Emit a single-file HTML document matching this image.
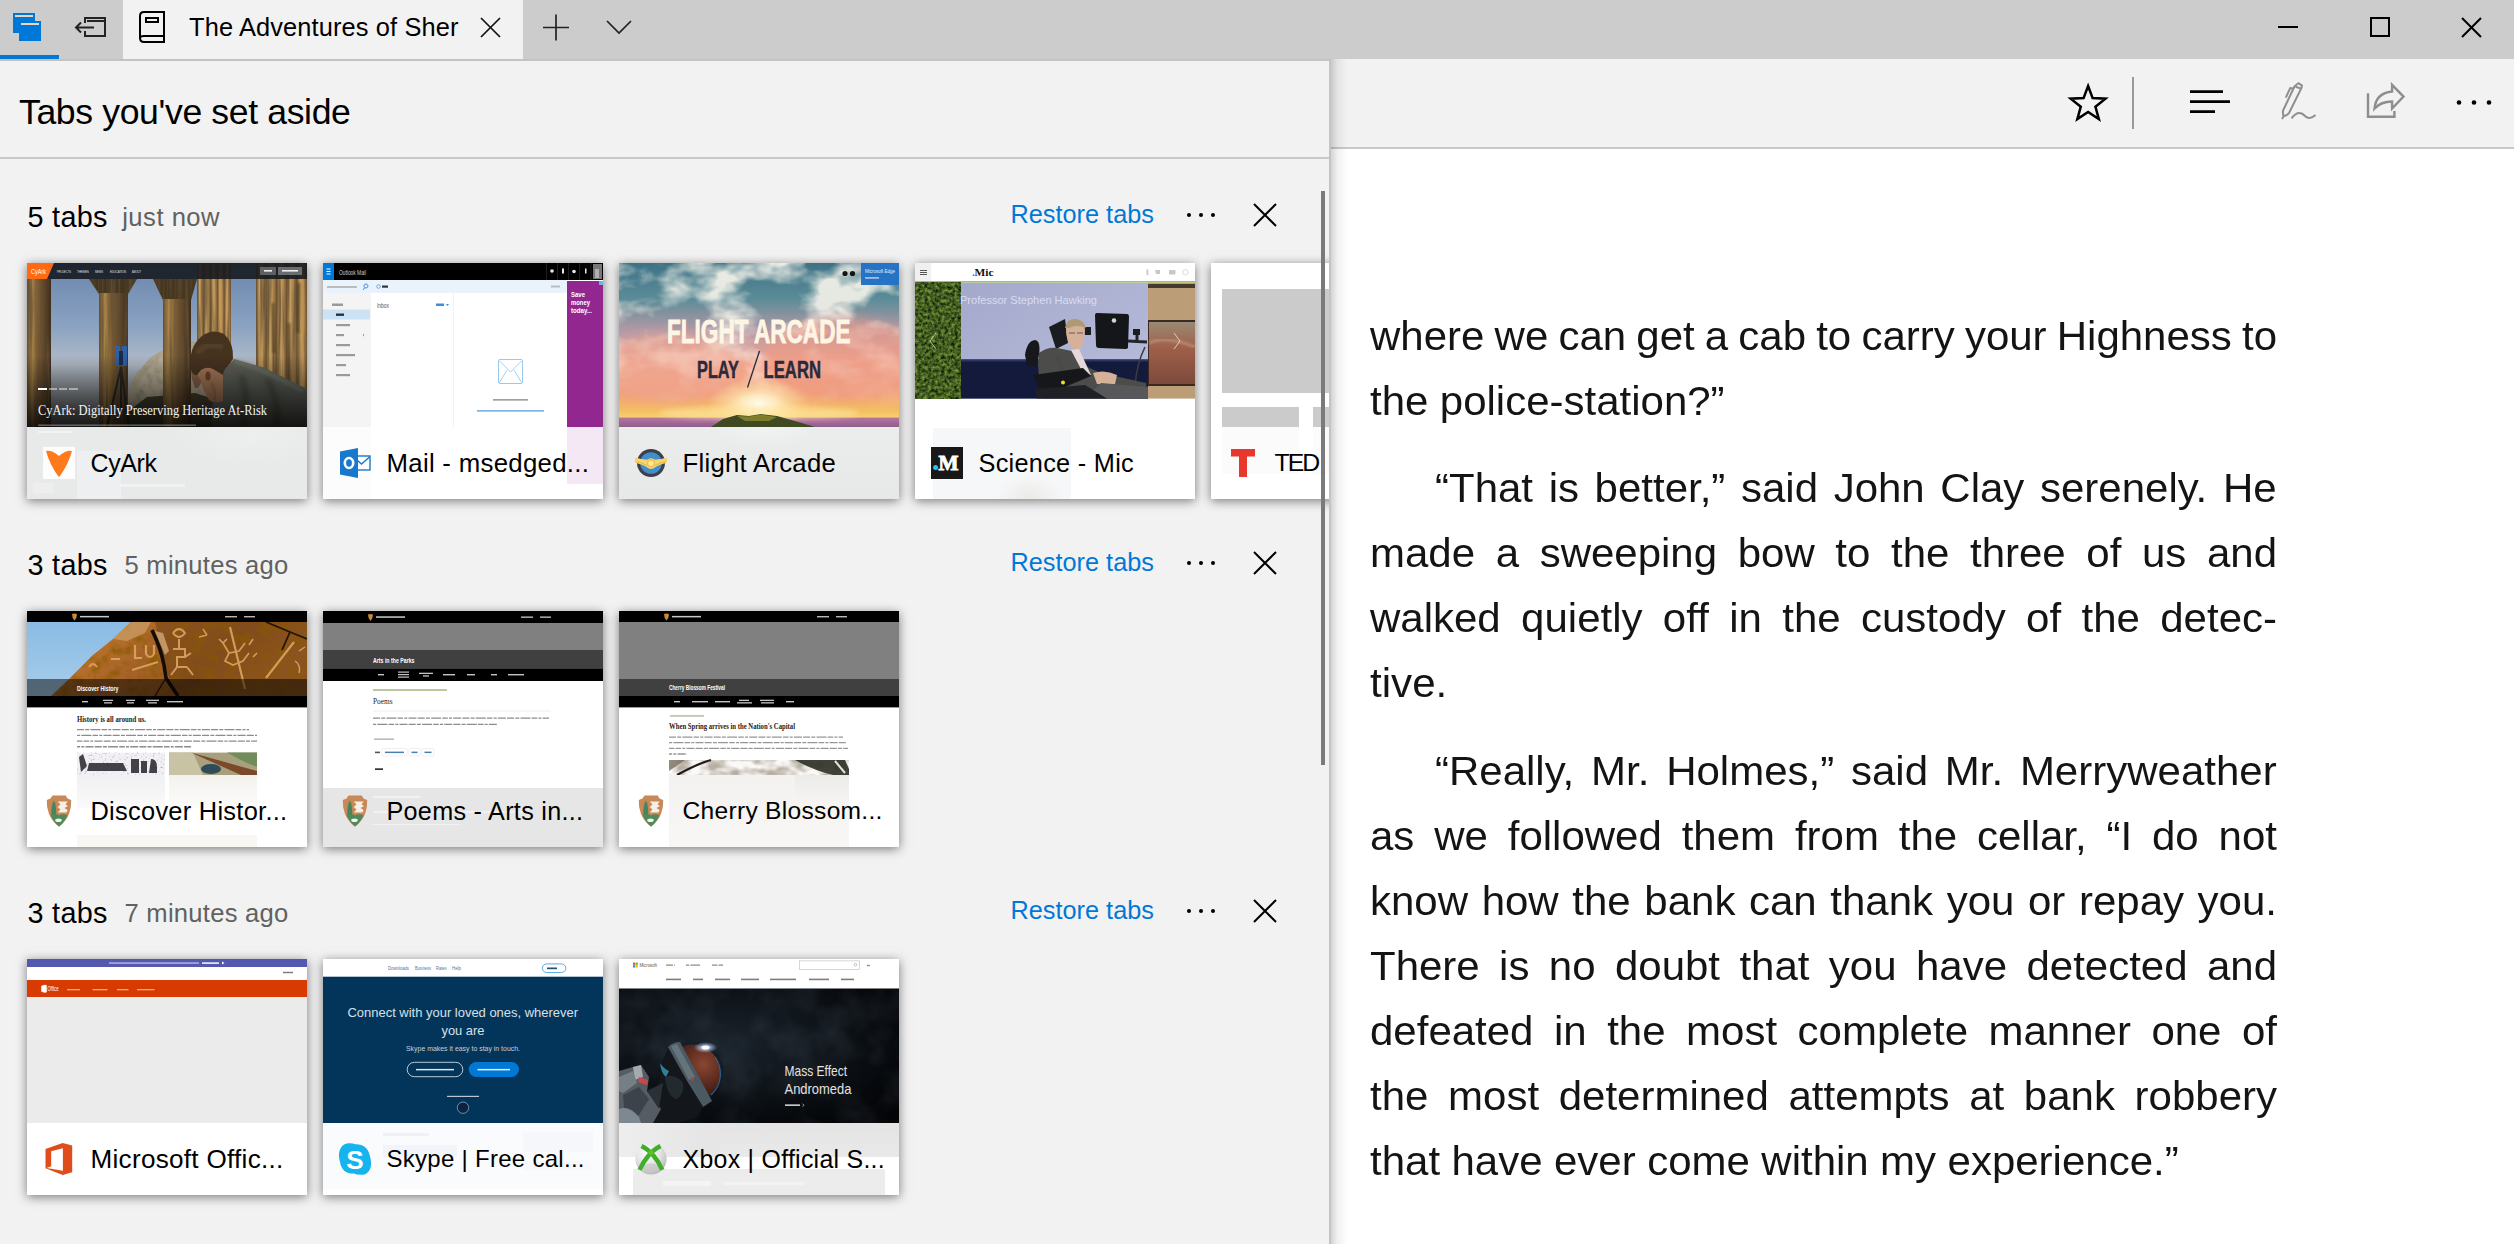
<!DOCTYPE html>
<html><head><meta charset="utf-8"><title>Tabs you've set aside</title>
<style>
*{box-sizing:border-box;margin:0;padding:0}
html,body{width:2514px;height:1244px;overflow:hidden;background:#fff}
body{font-family:"Liberation Sans",sans-serif;color:#000;position:relative}
.abs{position:absolute}
#titlebar{position:absolute;left:0;top:0;width:2514px;height:59px;background:#cccccc}
#tbline{position:absolute;left:0;top:59px;width:1331px;height:2px;background:#c3c3c3}
#tab{position:absolute;left:123px;top:0;width:400px;height:59px;background:#f2f2f2}
#tabtxt{position:absolute;left:189px;top:12px;font-size:25.4px;line-height:30px;white-space:nowrap;letter-spacing:.13px}
#bluebar{position:absolute;left:0;top:55px;width:59px;height:4px;background:#0078d7}
#panel{position:absolute;left:0;top:61px;width:1329px;height:1183px;background:#f2f2f2}
#pborder{position:absolute;left:1329px;top:59px;width:2px;height:1185px;background:#c4c4c4}
#pshadow{position:absolute;left:1331px;top:59px;width:16px;height:1185px;background:linear-gradient(90deg,rgba(0,0,0,.17),rgba(0,0,0,.06) 40%,rgba(0,0,0,0))}
#phead{position:absolute;left:19px;top:92px;font-size:35.6px;line-height:40px;white-space:nowrap;letter-spacing:-0.36px}
#pline{position:absolute;left:0;top:157px;width:1329px;height:2px;background:#c8c8c8}
#scroll{display:none}
#toolbar{position:absolute;left:1331px;top:59px;width:1183px;height:88px;background:#f2f2f2}
#tline{position:absolute;left:1331px;top:147px;width:1183px;height:2px;background:#c9c9c9}
.gh{position:absolute;left:0;width:1329px;height:50px}
.gh .n{position:absolute;left:27.5px;top:-0.5px;font-size:28.8px;line-height:34px;white-space:nowrap;letter-spacing:.3px}
.gh .t{position:absolute;left:124.5px;top:.4px;font-size:25.6px;line-height:34px;color:#616161;white-space:nowrap;letter-spacing:.25px}
.gh .r{position:absolute;left:1010.5px;top:-3px;font-size:25.3px;line-height:34px;color:#0078d7;white-space:nowrap;letter-spacing:0}
.gh .d{position:absolute;top:13px;width:4.4px;height:4.4px;border-radius:50%;background:#000}
.gh svg{position:absolute;left:1252px;top:2px}
.card{position:absolute;width:280px;height:236px;background:#fff;box-shadow:0 2px 10px rgba(0,0,0,.5);overflow:hidden}
.img{position:absolute;left:0;top:0;width:280px;height:164px;overflow:hidden}
.lbl{position:absolute;left:0;top:164px;width:280px;height:72px;overflow:hidden}
.fav{position:absolute;left:16px;top:184px;width:32px;height:32px}
.ttl{position:absolute;left:63.5px;top:183.5px;font-size:25px;line-height:32px;white-space:nowrap;letter-spacing:.28px}
.rl{position:absolute;font-size:41.5px;line-height:60px;white-space:pre;transform-origin:0 0;color:#141414}
</style></head><body>
<div id="titlebar"></div>
<div id="tab"></div>
<div id="tbline"></div>
<div id="bluebar"></div>
<!-- tab icons -->
<svg class="abs" style="left:0;top:0" width="540" height="59" viewBox="0 0 540 59">
 <rect x="13" y="13" width="22" height="20" fill="#0078d7"/>
 <rect x="19" y="21" width="22" height="20" fill="#0078d7"/>
 <rect x="15" y="15" width="18" height="2" fill="#e6d6c8"/>
 <rect x="21" y="23" width="18" height="2" fill="#e6d6c8"/>
 <g fill="none" stroke="#222" stroke-width="2">
  <path d="M85 23 V18 H105 V36 H85 V31"/>
  <path d="M87 21 H104"/>
  <path d="M94 27.5 H76 M81 22.5 L76 27.5 L81 32.5"/>
 </g>
 <g fill="none" stroke="#000" stroke-width="2">
  <path d="M164 12 H144 Q140 12 140 16 V38 Q140 42 144 42 H164 Z"/>
  <path d="M140 38 Q140 36 144 36 H164"/>
  <rect x="146" y="18" width="12" height="4"/>
 </g>
 <g fill="none" stroke="#111" stroke-width="1.7">
  <path d="M481 18 L500 37 M500 18 L481 37"/>
  <path d="M543 27.5 H569 M556 14.500 V40.500"/>
 </g>
</svg>
<div id="tabtxt">The Adventures of Sher</div>
<svg class="abs" style="left:530px;top:0" width="120" height="59" viewBox="0 0 120 59">
 <g fill="none" stroke="#222" stroke-width="1.7"><path d="M13 27.5 H39 M26 14.5 V40.5"/><path d="M77 21 L89 33 L101 21"/></g>
</svg>
<!-- window controls -->
<svg class="abs" style="left:2260px;top:0" width="254" height="59" viewBox="0 0 254 59">
 <g fill="none" stroke="#000" stroke-width="2"><path d="M18 27 H38"/><rect x="111" y="18" width="18" height="18"/><path d="M202 18 L221 37 M221 18 L202 37"/></g>
</svg>
<div id="panel"></div>
<div id="toolbar"></div>
<div id="tline"></div>
<div id="pborder"></div>
<div id="pshadow"></div>
<div id="phead">Tabs you've set aside</div>
<div id="pline"></div>
<div id="scroll"></div>
<!-- toolbar icons -->
<svg class="abs" style="left:2040px;top:59px" width="474" height="88" viewBox="0 0 474 88">
 <path d="M48.10 27.00 L52.63 39.07 L65.50 39.64 L55.42 47.68 L58.86 60.11 L48.10 53.00 L37.34 60.11 L40.78 47.68 L30.70 39.64 L43.57 39.07 Z" fill="none" stroke="#000" stroke-width="2.5"/>
 <rect x="92" y="18" width="2" height="52" fill="#999"/>
 <g stroke="#000" stroke-width="2.7"><path d="M150 32.600 H183 M150 42.700 H190 M150 52.600 H175"/></g>
 <g fill="none" stroke="#8e8e8e" stroke-width="2" stroke-linejoin="round"><path d="M254.400 27.500 L258.300 24.200 L261.900 26.400 L261.500 28.900 L249.300 53.500 Q247.500 56.500 243.800 57 Q242.300 54.500 243.200 51.300 Z"/><path d="M255.500 27.800 L261.300 29.600"/><path d="M253 29.800 L250.300 28.900 L245.800 38.600"/><path d="M243.800 57 L242 60"/><path d="M251.500 59.300 Q255.500 54 259.400 54 Q262.500 54 265 57 Q269.500 61.500 275.500 56.100"/></g>
 <g fill="none" stroke="#8e8e8e" stroke-width="2.400"><path d="M328 34.300 V57.800 H354.400 V52"/><path d="M352.100 25.800 L363.500 37.600 L352.100 49.500 V42.500 Q341 42.500 334.500 49.500 Q336 34 352.100 32.500 Z"/></g>
 <g fill="#000"><circle cx="419" cy="43.500" r="2.300"/><circle cx="434" cy="43.500" r="2.300"/><circle cx="449" cy="43.500" r="2.300"/></g>
</svg>
<div class="gh" style="top:200px"><div class="n">5 tabs</div><div class="t" style="left:122.2px;letter-spacing:.5px">just now</div><div class="r">Restore tabs</div>
<div class="d" style="left:1186.7px"></div><div class="d" style="left:1198.9px"></div><div class="d" style="left:1210.8px"></div>
<svg width="26" height="26" viewBox="0 0 26 26"><path d="M2 2 L24 24 M24 2 L2 24" stroke="#000" stroke-width="2" fill="none"/></svg></div>
<div class="gh" style="top:548px"><div class="n">3 tabs</div><div class="t">5 minutes ago</div><div class="r">Restore tabs</div>
<div class="d" style="left:1186.7px"></div><div class="d" style="left:1198.9px"></div><div class="d" style="left:1210.8px"></div>
<svg width="26" height="26" viewBox="0 0 26 26"><path d="M2 2 L24 24 M24 2 L2 24" stroke="#000" stroke-width="2" fill="none"/></svg></div>
<div class="gh" style="top:896px"><div class="n">3 tabs</div><div class="t">7 minutes ago</div><div class="r">Restore tabs</div>
<div class="d" style="left:1186.7px"></div><div class="d" style="left:1198.9px"></div><div class="d" style="left:1210.8px"></div>
<svg width="26" height="26" viewBox="0 0 26 26"><path d="M2 2 L24 24 M24 2 L2 24" stroke="#000" stroke-width="2" fill="none"/></svg></div><!-- shared defs -->
<svg width="0" height="0" style="position:absolute">
 <defs>
  <filter id="b1" x="-10%" y="-10%" width="120%" height="120%"><feGaussianBlur stdDeviation="1"/></filter>
  <filter id="b2" x="-20%" y="-20%" width="140%" height="140%"><feGaussianBlur stdDeviation="2.5"/></filter>
  <filter id="b4" x="-30%" y="-30%" width="160%" height="160%"><feGaussianBlur stdDeviation="5"/></filter>
  <filter id="bs" x="-5%" y="-5%" width="110%" height="110%"><feGaussianBlur stdDeviation="0.45"/></filter>
  <symbol id="nps" viewBox="0 0 32 32">
   <g filter="url(#bs)">
   <path d="M9.500 .5 H22.700 L24.500 3.500 L28.200 5 Q28.600 12 26 19 Q22.500 27 16 31.800 Q9.500 27 6 19 Q3.400 12 3.800 5 L7.500 3.500 Z" fill="#c98858"/>
   <path d="M7.500 20 Q12 17.500 16 20.500 Q20 18 24.500 20.500 Q21 27.500 16 31.500 Q11 27.500 7.500 20 Z" fill="#4d8a5c"/>
   <path d="M10.800 5.500 Q13.500 9 13.200 19.500 L8.300 19.500 Q8 10 10.800 5.500 Z" fill="#47855a"/>
   <path d="M14.700 6.500 H24.500 L22.500 9.500 L25 11 L21.500 13 L24.600 15 L23.500 17.500 H14.800 L17.500 14.500 L14.700 12 L17.500 9.500 Z" fill="#f7efe6"/>
   <ellipse cx="15.500" cy="25.200" rx="3.300" ry="1.800" fill="#f3f6f2"/>
   </g>
  </symbol>
 </defs>
</svg>

<!-- ============ ROW 1 ============ -->
<!-- CyArk -->
<div class="card" style="left:27px;top:263px">
<div class="img"><svg width="280" height="164" viewBox="0 0 280 164">
 <defs>
  <linearGradient id="cy_sky" x1="0" y1="0" x2="0" y2="1"><stop offset="0" stop-color="#6a86ad"/><stop offset=".4" stop-color="#8ca4c2"/><stop offset=".62" stop-color="#b3bcc8"/><stop offset=".8" stop-color="#9a9ea3"/><stop offset="1" stop-color="#6d6f70"/></linearGradient>
  <linearGradient id="cy_c1" x1="0" y1="0" x2="1" y2="0"><stop offset="0" stop-color="#6b5030"/><stop offset=".2" stop-color="#a98548"/><stop offset=".45" stop-color="#7a5c34"/><stop offset=".75" stop-color="#5a4328"/><stop offset="1" stop-color="#3e2e1c"/></linearGradient>
  <linearGradient id="cy_c2" x1="0" y1="0" x2=".2" y2="0" spreadMethod="repeat"><stop offset="0" stop-color="#6e5230"/><stop offset=".35" stop-color="#c79e5e"/><stop offset=".7" stop-color="#b48c50"/><stop offset="1" stop-color="#6e5230"/></linearGradient>
  <linearGradient id="cy_dk" x1="0" y1="0" x2="0" y2="1"><stop offset="0" stop-color="#000" stop-opacity="0"/><stop offset=".55" stop-color="#000" stop-opacity=".45"/><stop offset="1" stop-color="#000" stop-opacity=".8"/></linearGradient>
  <filter id="cy_st" x="0" y="0" width="100%" height="100%"><feTurbulence type="fractalNoise" baseFrequency=".35 .012" numOctaves="2" seed="8"/><feColorMatrix values="0 0 0 0 .12  0 0 0 0 .08  0 0 0 0 .04  2.600 0 0 0 -1.050"/></filter>
  <filter id="cy_rk" x="0" y="0" width="100%" height="100%"><feTurbulence type="fractalNoise" baseFrequency=".12 .09" numOctaves="3" seed="21"/><feColorMatrix values="0 0 0 0 .25  0 0 0 0 .22  0 0 0 0 .16  2.200 0 0 0 -1"/></filter>
  <clipPath id="cy_cols"><path d="M0 16 H24 V164 H0 Z M62 16 H110 L101 31 V164 H72 V31 Z M126 16 H170 L164 37 V164 H136 V37 Z M170 0 H204 V120 H170 Z M229 0 H280 V164 H229 Z"/></clipPath>
  <clipPath id="cy_mt"><path d="M96 140 L108 112 L124 94 L148 80 L170 78 L196 96 L240 104 L280 100 V164 H96 Z"/></clipPath>
 </defs>
 <rect width="280" height="164" fill="url(#cy_sky)"/>
 <path d="M96 140 L108 112 L124 94 L148 80 L170 78 L196 96 L240 104 L280 100 V164 H96 Z" fill="#aea58e"/>
 <path d="M110 122 L128 98 L150 86 L162 96 L150 120 L128 140 Z" fill="#bdb49c" opacity=".75"/>
 <rect x="96" y="76" width="184" height="88" filter="url(#cy_rk)" clip-path="url(#cy_mt)" opacity=".7"/>
 <path d="M96 152 L120 134 L168 130 L200 140 V164 H96 Z" fill="#45412f"/>
 <rect x="0" y="16" width="24" height="148" fill="url(#cy_c1)"/>
 <path d="M62 16 H110 L101 31 H72 Z" fill="#45351f"/>
 <rect x="72" y="30" width="29" height="134" fill="url(#cy_c1)"/>
 <path d="M126 16 H170 L164 37 H136 Z" fill="#48371f"/>
 <rect x="136" y="36" width="28" height="128" fill="url(#cy_c1)"/>
 <rect x="170" y="0" width="34" height="120" fill="url(#cy_c2)"/>
 <rect x="229" y="0" width="51" height="164" fill="url(#cy_c2)"/>
 <rect width="280" height="164" filter="url(#cy_st)" clip-path="url(#cy_cols)" opacity=".85"/>
 <path d="M246 40 L247 90 M262 60 L263 120 M272 20 L271 70" stroke="#2f2012" stroke-width="3" fill="none" opacity=".5" filter="url(#b1)"/>
 <rect x="88" y="83" width="5" height="20" fill="#2f5fa5"/><rect x="95" y="83" width="5" height="20" fill="#2f5fa5"/><rect x="92" y="88" width="4" height="14" fill="#1b2c48"/>
 <path d="M94 104 L80 164 M94 104 L102 164 M94 104 L94 150" stroke="#2a2622" stroke-width="2"/>
 <path d="M186 136 L195 110 L207 96 L237 104.700 L280 126 V164 H184 Z" fill="#5d6057"/>
 <path d="M207 98 Q232 104 276 128" stroke="#777b70" stroke-width="5" fill="none" opacity=".55" filter="url(#b1)"/>
 <path d="M214 112 Q222 130 216 164 M240 116 Q252 136 250 164" stroke="#3a3d36" stroke-width="6" fill="none" opacity=".6" filter="url(#b2)"/>
 <path d="M174 107 Q180 103 186 106 L196 110 V138 Q188 141 182 137 Q176 128 173 118 Z" fill="#a67756"/>
 <path d="M164 106 L170 111 L174 118 Q173 126 168 125 Q164 116 164 106 Z" fill="#86604a"/>
 <path d="M164 106 Q161 84 175 73 Q186 65 197 71 Q207 80 206 96 L200 104 Q196 108 196 112 L186 106 Q180 103 174 107 L170 112 Q165 112 164 106 Z" fill="#46331f"/>
 <path d="M170 90 Q180 78 196 84" stroke="#5e4830" stroke-width="6" fill="none" opacity=".55" filter="url(#b1)"/>
 <ellipse cx="181" cy="113" rx="2.600" ry="4.500" fill="#6e4330"/>
 <path d="M184 120 Q190 128 188 138" stroke="#8a5e44" stroke-width="3" fill="none" opacity=".7" filter="url(#b1)"/>
 <rect y="92" width="280" height="72" fill="url(#cy_dk)"/>
 <rect width="280" height="16" fill="#14181e" opacity=".88"/>
 <path d="M0 0 H27 L20 16 H0 Z" fill="#ff6a13"/>
 <text x="4" y="11" font-size="7" fill="#fff" font-family="Liberation Sans" textLength="15" lengthAdjust="spacingAndGlyphs">CyArk</text>
 <g fill="#e0e0e0" font-size="4.200" font-family="Liberation Sans"><text x="30" y="9.700" textLength="14" lengthAdjust="spacingAndGlyphs">PROJECTS</text><text x="50" y="9.700" textLength="12" lengthAdjust="spacingAndGlyphs">THEMES</text><text x="68" y="9.700" textLength="8" lengthAdjust="spacingAndGlyphs">NEWS</text><text x="83" y="9.700" textLength="16" lengthAdjust="spacingAndGlyphs">EDUCATION</text><text x="105" y="9.700" textLength="9" lengthAdjust="spacingAndGlyphs">ABOUT</text></g>
 <rect x="233" y="4" width="16" height="8" fill="#6f757c" opacity=".75"/><rect x="251" y="4" width="24" height="8" fill="#80858c" opacity=".75"/>
 <rect x="237" y="7" width="8" height="1.600" fill="#eee"/><rect x="255" y="7" width="16" height="1.600" fill="#eee"/>
 <rect x="11" y="125" width="9" height="2" fill="#fff"/><rect x="22" y="125" width="8" height="2" fill="#fff" opacity=".45"/><rect x="32" y="125" width="8" height="2" fill="#fff" opacity=".45"/><rect x="42" y="125" width="9" height="2" fill="#fff" opacity=".45"/>
 <text x="11" y="151.500" font-size="15.500" fill="#f2f2f2" font-family="Liberation Serif" textLength="229" lengthAdjust="spacingAndGlyphs">CyArk: Digitally Preserving Heritage At-Risk</text>
 <rect x="11" y="161.500" width="158" height="1.400" fill="#bbb" opacity=".5"/>
</svg></div>
<div class="lbl" style="background:#e8e9e9"><div class="abs" style="left:11px;top:4px;width:34px;height:2px;background:#f3f3f3"></div><div class="abs" style="left:50px;top:24px;width:44px;height:48px;background:#eff0f1;opacity:.8"></div><div class="abs" style="left:92px;top:57px;width:66px;height:2.500px;background:#f2f2f2"></div><div class="abs" style="left:6px;top:56px;width:20px;height:10px;background:#eeeeee"></div><div class="abs" style="left:140px;top:0;width:140px;height:40px;background:radial-gradient(ellipse at 60% 20%,#edeeee,rgba(232,233,233,0) 70%)"></div></div>
<svg class="fav" viewBox="0 0 32 32"><rect width="32" height="32" fill="#fdfdfd"/><path d="M3 4 Q9 3 16 9 Q23 3 29 4 Q25 18 17 29 Q16 30 15 29 Q7 18 3 4 Z" fill="#ff7a1a" filter="url(#bs)"/></svg>
<div class="ttl" style="font-size:25px;letter-spacing:-.4px">CyArk</div>
</div>

<!-- Mail -->
<div class="card" style="left:323px;top:263px">
<div class="img"><svg width="280" height="164" viewBox="0 0 280 164">
 <rect width="280" height="164" fill="#fff"/>
 <rect y="17" width="48" height="147" fill="#f4f4f4"/>
 <rect y="17" width="244" height="13" fill="#eaf3fb"/>
 <rect y="46.500" width="47" height="10" fill="#cce3f6"/>
 <rect x="130" y="30" width=".6" height="134" fill="#e8e8e8"/>
 <rect width="280" height="17" fill="#000"/>
 <rect width="11" height="17" fill="#0078d7"/>
 <path d="M3.500 6 H7.500 M3.500 8.500 H7.500 M3.500 11 H7.500" stroke="#fff" stroke-width="1"/>
 <text x="16" y="11.500" font-size="6.500" fill="#d0d0d0" font-family="Liberation Sans" textLength="27" lengthAdjust="spacingAndGlyphs">Outlook Mail</text>
 <g stroke="#333" stroke-width=".6"><path d="M223.500 0 V17 M234.500 0 V17 M245.500 0 V17 M256.500 0 V17 M268 0 V17"/></g>
 <g fill="#e8e8e8"><circle cx="229" cy="8" r="1.800"/><rect x="239" y="5.500" width="2" height="5"/><circle cx="251" cy="8.500" r="1.800"/><rect x="262" y="5.500" width="1.500" height="5"/></g>
 <rect x="270" y="1" width="9" height="15" fill="#777"/><rect x="272" y="6" width="4" height="9" fill="#b0b0b0"/>
 <g fill="#9a9a9a"><rect x="4" y="23" width="30" height="2" opacity=".6"/><rect x="9" y="40.500" width="11" height="2.500"/><rect x="13" y="61" width="14" height="2.200"/><rect x="13" y="71" width="8" height="2.200"/><rect x="40" y="71" width="1" height="2.200"/><rect x="13" y="81" width="14" height="2.200"/><rect x="13" y="91" width="19" height="2.200"/><rect x="13" y="101" width="10" height="2.200"/><rect x="13" y="111" width="14" height="2.200"/></g>
 <rect x="13" y="50.500" width="8" height="2.400" fill="#234"/>
 <path d="M43 21 a2 2 0 1 1 -.1 0 M41.500 25 L40 27" stroke="#2a7fd0" stroke-width=".9" fill="none"/>
 <circle cx="55.500" cy="23.500" r="1.800" fill="none" stroke="#2a7fd0" stroke-width=".6"/><rect x="59" y="22.500" width="6" height="2.200" fill="#333"/>
 <rect x="228" y="22.500" width="9" height="2" fill="#bbb"/>
 <text x="54" y="44.500" font-size="6.500" fill="#555" font-family="Liberation Sans" textLength="12" lengthAdjust="spacingAndGlyphs">Inbox</text>
 <rect x="113" y="40.500" width="8" height="2.500" fill="#3a8fd8"/><path d="M123 41 l1.500 2 l1.500 -2" fill="#3a8fd8"/>
 <rect x="175.500" y="96.500" width="24" height="24" rx="1.500" fill="none" stroke="#8cc3ea" stroke-width=".9"/>
 <path d="M176.500 98 L187.500 109 L198.500 98 M176.500 119.500 L184 107 M198.500 119.500 L191 107" stroke="#8cc3ea" stroke-width=".8" fill="none"/>
 <rect x="170" y="136" width="35" height="1.700" fill="#8a8a8a" opacity=".8"/>
 <rect x="154" y="147" width="67" height="1.700" fill="#5aa2e2" opacity=".8"/>
 <rect x="244" y="18" width="36" height="146" fill="#92278f"/>
 <g fill="#fff" font-size="8" font-weight="700" font-family="Liberation Sans"><text x="248" y="34" textLength="14" lengthAdjust="spacingAndGlyphs">Save</text><text x="248" y="42" textLength="19" lengthAdjust="spacingAndGlyphs">money</text><text x="248" y="50" textLength="21" lengthAdjust="spacingAndGlyphs">today...</text></g>
 <rect x="276" y="18" width="4" height="4" fill="#7ab0e0"/>
</svg></div>
<div class="lbl" style="background:#fff"><div class="abs" style="left:0;top:0;width:48px;height:72px;background:#fcfcfc"></div><div class="abs" style="left:244px;top:0;width:36px;height:57px;background:#f3e8f3"></div></div>
<svg class="fav" viewBox="0 0 32 32"><rect x="14" y="9" width="17" height="14" fill="#fff" stroke="#1878cd" stroke-width="1.400"/><path d="M14.500 10 L22.500 17 L30.500 10" fill="none" stroke="#1878cd" stroke-width="1.400"/><path d="M1 4.500 L19 1 V31 L1 27.500 Z" fill="#1878cd"/><ellipse cx="10" cy="16" rx="4.200" ry="5" fill="none" stroke="#fff" stroke-width="2.600"/></svg>
<div class="ttl" style="font-size:25.8px">Mail - msedged...</div>
</div>

<!-- Flight Arcade -->
<div class="card" style="left:619px;top:263px">
<div class="img"><svg width="280" height="164" viewBox="0 0 280 164">
 <defs>
  <linearGradient id="fa_sky" x1="0" y1="0" x2="0" y2="1"><stop offset="0" stop-color="#3d7285"/><stop offset=".22" stop-color="#5b8c98"/><stop offset=".42" stop-color="#b79aa6"/><stop offset=".6" stop-color="#efa590"/><stop offset=".8" stop-color="#f1a078"/><stop offset=".9" stop-color="#f4be62"/><stop offset=".94" stop-color="#f6cf70"/><stop offset=".945" stop-color="#b773a0"/><stop offset="1" stop-color="#8d5f8c"/></linearGradient>
  <radialGradient id="fa_sun" cx=".5" cy=".5" r=".5"><stop offset="0" stop-color="#fffdf0" stop-opacity="1"/><stop offset=".35" stop-color="#fff2c8" stop-opacity=".85"/><stop offset="1" stop-color="#ffd98a" stop-opacity="0"/></radialGradient>
  <filter id="fa_cl" x="0" y="0" width="100%" height="100%"><feTurbulence type="fractalNoise" baseFrequency=".016 .026" numOctaves="4" seed="14"/><feColorMatrix values="0 0 0 0 1  0 0 0 0 .95  0 0 0 0 .86  4.200 0 0 0 -1.850"/></filter>
  <linearGradient id="fa_m" x1="0" y1="0" x2="0" y2="1"><stop offset="0" stop-color="#fff"/><stop offset=".55" stop-color="#fff" stop-opacity=".85"/><stop offset=".9" stop-color="#fff" stop-opacity="0"/></linearGradient>
  <mask id="fa_mask"><rect width="280" height="164" fill="url(#fa_m)"/></mask>
 </defs>
 <rect width="280" height="164" fill="url(#fa_sky)"/>
 <rect width="280" height="150" filter="url(#fa_cl)" mask="url(#fa_mask)" opacity=".9"/>
 <ellipse cx="225" cy="95" rx="80" ry="40" fill="#ef9a84" opacity=".55" filter="url(#b4)"/>
 <ellipse cx="50" cy="105" rx="70" ry="35" fill="#f0a692" opacity=".55" filter="url(#b4)"/>
 <ellipse cx="140" cy="141" rx="52" ry="26" fill="url(#fa_sun)"/>
 <ellipse cx="140" cy="150" rx="100" ry="7" fill="#ffe9a8" opacity=".55" filter="url(#b2)"/>
 <path d="M92 164 L104 156 L118 152 L130 153 L142 151 L158 153 L176 158 L196 164 Z" fill="#3f4a22"/>
 <path d="M118 153 L130 153.500 L142 151.500 L158 154 L150 158 L126 158 Z" fill="#8d8a2e" opacity=".8"/>
 <rect x="242" y="0" width="38" height="22" fill="#2672c4"/>
 <text x="246" y="10" font-size="6" fill="#e8f0fb" font-family="Liberation Sans" textLength="30" lengthAdjust="spacingAndGlyphs">Microsoft Edge</text>
 <rect x="246" y="14" width="14" height="1.800" fill="#9cc0ea"/>
 <circle cx="226" cy="10.500" r="2.600" fill="#141414"/><circle cx="233.500" cy="10.500" r="2.600" fill="#141414"/>
 <text x="48" y="79.500" font-size="33.500" font-weight="700" fill="#fdf6e4" stroke="#fdf6e4" stroke-width=".9" font-family="Liberation Sans" textLength="183.500" lengthAdjust="spacingAndGlyphs">FLIGHT ARCADE</text>
 <text x="78" y="115" font-size="23.500" font-weight="700" fill="#2b2a3c" stroke="#2b2a3c" stroke-width=".5" font-family="Liberation Sans" textLength="42" lengthAdjust="spacingAndGlyphs">PLAY</text>
 <text x="144.500" y="115" font-size="23.500" font-weight="700" fill="#2b2a3c" stroke="#2b2a3c" stroke-width=".5" font-family="Liberation Sans" textLength="57.500" lengthAdjust="spacingAndGlyphs">LEARN</text>
 <path d="M140.500 88 L128.500 124.500" stroke="#2b2a3c" stroke-width="1.300"/>
</svg></div>
<div class="lbl" style="background:linear-gradient(180deg,#ebecec,#e7e8e8)"><div class="abs" style="left:90px;top:0;width:110px;height:22px;background:radial-gradient(ellipse at 50% 0,#f2f2f2,rgba(242,242,242,0) 70%)"></div></div>
<svg class="fav" viewBox="0 0 32 32"><circle cx="16" cy="16" r="14" fill="#3e3e4c"/><circle cx="16" cy="16" r="10.800" fill="#3f8fcd"/><path d="M0 10.500 Q6 12.500 12 12.800 Q16 9.800 20 12.800 Q26 12.500 32 10.500 V15.500 Q25 17.500 20.500 20 Q16 24 11.500 20 Q7 17.500 0 15.500 Z" fill="#fbd46c"/><path d="M1 14.500 Q8 16 12 18.500 M31 14.500 Q24 16 20 18.500" stroke="#e9b94e" stroke-width="1.200" fill="none"/><circle cx="16" cy="16.300" r="4" fill="#eebc52"/><circle cx="16" cy="16.300" r="2.800" fill="#fde88a"/></svg>
<div class="ttl" style="font-size:25.7px">Flight Arcade</div>
</div>

<!-- Mic -->
<div class="card" style="left:915px;top:263px">
<div class="img"><svg width="280" height="164" viewBox="0 0 280 164">
 <defs>
  <filter id="mc_f" x="0" y="0" width="100%" height="100%"><feTurbulence type="fractalNoise" baseFrequency=".22" numOctaves="2" seed="3"/><feColorMatrix values="0 0 0 0 .24  0 0 0 0 .36  0 0 0 0 .12  0 0 0 0 1"/><feComponentTransfer><feFuncR type="linear" slope="1"/></feComponentTransfer></filter>
  <filter id="mc_f2" x="0" y="0" width="100%" height="100%" color-interpolation-filters="sRGB"><feTurbulence type="fractalNoise" baseFrequency=".3" numOctaves="3" seed="5"/><feColorMatrix values=".8 0 0 0 -.125  .9 0 0 0 -.075  .35 0 0 0 -.04  0 0 0 0 1"/></filter>
  <linearGradient id="mc_bg" x1="0" y1="0" x2="1" y2="1"><stop offset="0" stop-color="#a4a9cc"/><stop offset="1" stop-color="#b9bddb"/></linearGradient>
  <linearGradient id="mc_pt" x1="0" y1="0" x2="0" y2="1"><stop offset="0" stop-color="#9a8a74"/><stop offset=".4" stop-color="#a0604a"/><stop offset="1" stop-color="#7d4a3c"/></linearGradient>
 </defs>
 <rect width="280" height="164" fill="#fff"/>
 <rect width="16" height="18" fill="#f0f0f0"/>
 <path d="M5 7.500 H12 M5 9.500 H12 M5 11.500 H12" stroke="#444" stroke-width=".9"/>
 <text x="59.500" y="13" font-size="9.500" font-weight="700" fill="#111" font-family="Liberation Serif" textLength="19" lengthAdjust="spacingAndGlyphs">Mic</text><rect x="57.700" y="11.300" width="1.700" height="1.700" fill="#1aa3e8"/>
 <g fill="#c8c8c8"><rect x="231.500" y="6.500" width="1.800" height="5.500"/><path d="M240 7 h5 v4 h-4 z"/><rect x="254" y="7" width="6.500" height="4.500" rx="1"/><circle cx="270.500" cy="9.300" r="2.700" fill="none" stroke="#d0d0d0" stroke-width=".8"/></g>
 <rect y="18" width="280" height="1.600" fill="#9bd03c"/>
 <rect x="0" y="19.600" width="46" height="116" filter="url(#mc_f2)"/>
 <rect x="0" y="19.600" width="46" height="116" fill="#2e4a18" opacity=".12"/>
 <rect x="46" y="19.600" width="187" height="116" fill="url(#mc_bg)"/>
 <rect x="46" y="96.500" width="187" height="39.100" fill="#131a3c"/>
 <rect x="46" y="96.500" width="187" height="2" fill="#2a3560"/>
 <rect x="233" y="19.600" width="47" height="116" fill="#bb9d78"/>
 <rect x="233" y="21" width="47" height="4" fill="#2a2018" opacity=".8"/>
 <rect x="233" y="57" width="47" height="66" fill="#3b2a22"/><rect x="234" y="59" width="46" height="62" fill="url(#mc_pt)"/>
 <path d="M234 80 Q250 72 280 84" stroke="#c9a890" stroke-width="3" fill="none" opacity=".5" filter="url(#b1)"/>
 <!-- person -->
 <path d="M180 52 Q180 50 182 50 L212 51 Q214 51 214 54 L213 84 Q213 86 210 86 L184 85 Q181 85 181 82 Z" fill="#15161a"/>
 <circle cx="199" cy="57.500" r="2.300" fill="#cfd3da"/>
 <path d="M213 78 L232 79 M222 70 v10" stroke="#23252c" stroke-width="3" fill="none"/>
 <path d="M230 84 Q222 100 220 122" stroke="#3a3c44" stroke-width="1.600" fill="none"/>
 <rect x="218" y="66" width="7" height="6" fill="#1c1d22"/>
 <path d="M110 92 Q112 78 120 77 Q126 78 124 92 L121 104 L112 102 Z" fill="#17181c"/>
 <path d="M134 64 L150 56 L153 80 L141 86 Z" fill="#1b1c20"/>
 <path d="M168 64 h8 v8 h-6 z" fill="#1b1c20"/>
 <path d="M151 66 Q152 57 160 57 Q170 58 170 68 L168 82 Q163 89 157 85 Q151 78 151 66 Z" fill="#d6b199"/>
 <path d="M150 65 Q152 55 161 56 Q169 57 171 65 Q162 61 154 65 Z" fill="#b09a74"/>
 <path d="M154 70 h6 m2 0 h6" stroke="#6a5a4a" stroke-width="1.200"/>
 <path d="M124 90 Q132 84 142 85 L157 88 L168 102 L186 110 L231 120 L233 135.600 H128 Q124 118 123 102 Z" fill="#4c4c4a"/>
 <path d="M140 92 Q150 104 152 126" stroke="#484846" stroke-width="2" fill="none" opacity=".7"/>
 <path d="M156 87 L164 86 L176 112 L168 110 Z" fill="#e5d8da"/>
 <path d="M178 110 Q190 106 202 112 L200 121 L182 121 Z" fill="#d6b199"/>
 <path d="M186 120 L233 124 V135.600 H170 Z" fill="#58585a"/>
 <path d="M118 112 L168 105 L176 113 L150 124 L126 128 Z" fill="#16171b"/>
 <circle cx="148" cy="119.500" r="2" fill="#e8e030"/>
 <path d="M120 126 L170 122 L192 135.600 H122 Z" fill="#202126"/>
 <text x="45" y="40.500" font-size="10.800" fill="#d9dcf0" font-family="Liberation Sans" textLength="137" lengthAdjust="spacingAndGlyphs">Professor Stephen Hawking</text>
 <path d="M21 70 L15 78 L21 86" stroke="#e0e6d8" stroke-width=".9" fill="none" opacity=".8"/><path d="M259 70 L265 78 L259 86" stroke="#f0e8e0" stroke-width=".9" fill="none" opacity=".85"/>
</svg></div>
<div class="lbl" style="background:#fff"><div class="abs" style="left:18px;top:1px;width:138px;height:71px;background:#f6f7f9"></div><div class="abs" style="left:80px;top:48px;width:70px;height:24px;background:radial-gradient(ellipse at 50% 100%,#eceae6,rgba(246,247,249,0) 70%)"></div></div>
<svg class="fav" viewBox="0 0 32 32"><rect width="32" height="32" fill="#181818"/><text x="7.600" y="22.800" font-size="21.500" font-weight="700" fill="#fff" stroke="#fff" stroke-width=".9" font-family="Liberation Serif" textLength="20" lengthAdjust="spacingAndGlyphs">M</text><circle cx="4.600" cy="20.600" r="2.500" fill="#2cc0f4"/></svg>
<div class="ttl" style="font-size:25.3px">Science - Mic</div>
</div>

<!-- TED (clipped) -->
<div class="abs" style="left:1203px;top:250px;width:126px;height:262px;overflow:hidden">
<div class="card" style="left:8px;top:13px">
<div class="img" style="background:#fff"><div class="abs" style="left:11px;top:26px;width:269px;height:104px;background:#cbcbcb"></div><div class="abs" style="left:11px;top:144px;width:77px;height:20px;background:#cbcbcb"></div><div class="abs" style="left:101.500px;top:144px;width:100px;height:20px;background:#cbcbcb"></div></div>
<div class="lbl" style="background:#fff"><div class="abs" style="left:11px;top:0;width:77px;height:47px;background:#fbfbfb"></div><div class="abs" style="left:101.500px;top:0;width:100px;height:47px;background:#fbfbfb"></div></div>
<svg class="fav" style="left:16px;top:184px" viewBox="0 0 32 32"><path d="M4 2 H28 V9.600 H20 V30 H12 V9.600 H4 Z" fill="#e8382d"/></svg>
<div class="ttl" style="font-size:24.8px;letter-spacing:-2px">TED</div>
</div></div>

<!-- ============ ROW 2 ============ -->
<!-- Discover History -->
<div class="card" style="left:27px;top:611px">
<div class="img"><svg width="280" height="164" viewBox="0 0 280 164">
 <defs>
  <linearGradient id="dh_sky" x1="0" y1="0" x2="0" y2="1"><stop offset="0" stop-color="#8abbe4"/><stop offset="1" stop-color="#a8cdea"/></linearGradient>
  <linearGradient id="dh_rk" x1="0" y1="0" x2="1" y2=".3"><stop offset="0" stop-color="#94541a"/><stop offset=".3" stop-color="#b8722a"/><stop offset=".5" stop-color="#a8642a"/><stop offset=".75" stop-color="#9a5a22"/><stop offset="1" stop-color="#b06c2a"/></linearGradient>
  <filter id="dh_n" x="0" y="0" width="100%" height="100%"><feTurbulence type="fractalNoise" baseFrequency=".09" numOctaves="3" seed="11"/><feColorMatrix values="0 0 0 0 .25  0 0 0 0 .1  0 0 0 0 0  1.8 0 0 0 -.75"/></filter>
  <filter id="dh_n2" x="0" y="0" width="100%" height="100%"><feTurbulence type="fractalNoise" baseFrequency=".5" numOctaves="2" seed="2"/><feColorMatrix values="0 0 0 0 .2  0 0 0 0 .2  0 0 0 0 .22  2 0 0 0 -1.150"/></filter>
  <clipPath id="dh_cp"><path d="M104 11 H280 V85 H24 L42 68 L66 44 L86 28 Z"/></clipPath>
 </defs>
 <rect width="280" height="164" fill="#fff"/>
 <rect y="11" width="280" height="74" fill="url(#dh_sky)"/>
 <g clip-path="url(#dh_cp)"><rect y="11" width="280" height="74" fill="url(#dh_rk)"/>
  <path d="M128 11 H280 V85 H152 L139 60 Z" fill="#6e4016" opacity=".55"/>
  <rect y="11" width="280" height="74" filter="url(#dh_n)"/>
  <path d="M86 28 L96 18 L104 11 H124 L118 22 L100 30 Z" fill="#c89a62" opacity=".8"/>
  <path d="M128 20 L136 22 L142 40 L138 44 Z" fill="#c9a272" opacity=".85"/>
  <path d="M125 19 Q134 38 137 54 L139 67 L151 85" stroke="#140c06" stroke-width="3.600" fill="none"/>
  <path d="M139 67 L128 85" stroke="#1e1208" stroke-width="1.200" fill="none"/>
  <path d="M239 11 L263 21 L280 28 M263 21 L255 39" stroke="#241408" stroke-width="1.800" fill="none"/>
  <g stroke="#dfa662" fill="none" opacity=".88" filter="url(#bs)">
   <path d="M108 34 v13 h7 M119 34 v9 q4 6 8 0 v-9" stroke-width="2.200"/>
   <path d="M105 59 L131 51" stroke-width="2"/>
   <path d="M84 48 h9 M62 56 q4 -6 8 0" stroke-width="1.800"/>
   <path d="M146 22 q6 -8 12 0 q-6 8 -12 0 M152 28 v10 M146 38 h12 v8 h-8 v10 h10 M158 46 l6 -4 M150 56 l-6 8 M160 56 l6 8" stroke-width="2"/>
   <path d="M203 16 L218 78" stroke-width="2.200"/>
   <path d="M192 28 l4 4 l4 -4 M196 32 l6 10 l10 -2 l6 -8 M202 42 l-4 8 l8 4 l10 -4 l6 -8 M222 34 l4 -6 M226 46 l4 -4" stroke-width="1.700"/>
   <path d="M267 31 L239 67" stroke-width="2.200"/>
   <path d="M176 18 l4 6 m-8 2 l8 -2 M268 50 q6 4 4 12 M272 40 l6 -4" stroke-width="1.500"/>
  </g>
 </g>
 <rect y="68" width="280" height="17" fill="#000" opacity=".5"/>
 <rect width="280" height="11" fill="#000"/>
 <rect y="85" width="280" height="11.400" fill="#000"/>
 <path d="M45 3 q2.500 -1 5 0 q0 4 -2.500 6.500 q-2.500 -2.500 -2.500 -6.500 z" fill="#c78a3c"/>
 <g fill="#c9c9c9"><rect x="53" y="4.900" width="29" height="1.500"/><rect x="198" y="5.100" width="12" height="1.300"/><rect x="217" y="5.100" width="11" height="1.300"/></g>
 <text x="50" y="79.500" font-size="6.800" font-weight="700" fill="#fff" font-family="Liberation Sans" textLength="41.500" lengthAdjust="spacingAndGlyphs">Discover History</text>
 <g fill="#c4c4c4"><rect x="55" y="90" width="6" height="1.400"/><rect x="76" y="88.700" width="10" height="1.300"/><rect x="77" y="91.200" width="8" height="1.300"/><rect x="99" y="88.700" width="9" height="1.300"/><rect x="100" y="91.200" width="7" height="1.300"/><rect x="119" y="88.700" width="13" height="1.300"/><rect x="121" y="91.200" width="9" height="1.300"/><rect x="140" y="90" width="16" height="1.400"/></g>
 <text x="50" y="110.500" font-size="7.600" font-weight="700" fill="#222" font-family="Liberation Serif" textLength="69" lengthAdjust="spacingAndGlyphs">History is all around us.</text>
 <g stroke="#8c8c8c" stroke-width="1.35" stroke-dasharray="7 1.2 4 1.2 10 1.2 5.500 1.200 3 1.200 8 1.200" fill="none"><path d="M50 118.55 H222" stroke-dashoffset="0"/><path d="M50 124.35 H230" stroke-dashoffset="9"/><path d="M50 130.05 H230" stroke-dashoffset="18"/><path d="M50 135.75 H165" stroke-dashoffset="27"/></g>
 <rect x="50" y="141.600" width="88" height="22.400" fill="#f2f0f4"/>
 <rect x="50" y="141.600" width="88" height="22.400" filter="url(#dh_n2)"/>
 <path d="M52 146 l4 -3 l4 12 l-6 6 z M62 152 h34 l4 8 h-40 z M104 148 h8 v14 h-8 z M124 148 q6 0 6 8 v6 h-8 z M114 150 h6 v12 h-6z" fill="#26232a" opacity=".85"/>
 <rect x="142" y="141.600" width="88" height="22.400" fill="#a8a07c"/>
 <path d="M142 141.600 H166 L176 164 H142 Z" fill="#c9c3a6"/><path d="M164 141.600 L230 160 V164 H214 Z" fill="#7a4a2a"/><path d="M200 141.600 H230 V156 Q214 150 200 141.600 Z" fill="#6f8c5a"/><ellipse cx="184" cy="158" rx="10" ry="5" fill="#2f4a58"/>
</svg></div>
<div class="lbl" style="background:#fff"><div class="abs" style="left:50px;top:0;width:88px;height:33px;background:linear-gradient(180deg,#f1f0f2,#fafafa)"></div><div class="abs" style="left:142px;top:0;width:88px;height:33px;background:linear-gradient(180deg,#f3f2ee,#fbfbfa)"></div><div class="abs" style="left:50px;top:60px;width:180px;height:12px;background:#f9f7f2"></div></div>
<svg class="fav"><use href="#nps" width="32" height="32"/></svg>
<div class="ttl" style="font-size:25.4px">Discover Histor...</div>
</div>

<!-- Poems -->
<div class="card" style="left:323px;top:611px">
<div class="img"><svg width="280" height="164" viewBox="0 0 280 164">
 <rect width="280" height="164" fill="#fff"/>
 <rect width="280" height="12" fill="#000"/>
 <rect y="12" width="280" height="27" fill="#808080"/>
 <rect y="39" width="280" height="18.300" fill="#404040"/>
 <rect y="57.300" width="280" height="12.700" fill="#000"/>
 <path d="M45 3.500 q2.500 -1 5 0 q0 4 -2.500 6.500 q-2.500 -2.500 -2.500 -6.500 z" fill="#c78a3c"/>
 <g fill="#c9c9c9"><rect x="53" y="5.300" width="29" height="1.500"/><rect x="198" y="5.500" width="12" height="1.300"/><rect x="217" y="5.500" width="11" height="1.300"/></g>
 <text x="50" y="51.500" font-size="6.800" font-weight="700" fill="#fff" font-family="Liberation Sans" textLength="41.500" lengthAdjust="spacingAndGlyphs">Arts in the Parks</text>
 <g fill="#c4c4c4"><rect x="55" y="63" width="6" height="1.400"/><rect x="75" y="60.500" width="11" height="1.200"/><rect x="75" y="63" width="11" height="1.200"/><rect x="75" y="65.500" width="11" height="1.200"/><rect x="96" y="61.700" width="14" height="1.300"/><rect x="100" y="64.300" width="6" height="1.300"/><rect x="120" y="63" width="12" height="1.400"/><rect x="144" y="63" width="8" height="1.400"/><rect x="168" y="63" width="6" height="1.400"/><rect x="185" y="63" width="16" height="1.400"/></g>
 <rect x="50" y="78.300" width="74" height="1.400" fill="#8a9a50" opacity=".8"/>
 <text x="50" y="93" font-size="8" fill="#222" font-family="Liberation Serif" textLength="19.500" lengthAdjust="spacingAndGlyphs">Poems</text>
 <rect x="50" y="99.800" width="178" height=".5" fill="#ddd"/>
 <g stroke="#8c8c8c" stroke-width="1.35" stroke-dasharray="7 1.2 4 1.2 10 1.2 5.500 1.200 3 1.200 8 1.200" fill="none"><path d="M50 107.15 H226" stroke-dashoffset="0"/><path d="M50 113.35 H175" stroke-dashoffset="9"/></g>
 <rect x="51" y="127.500" width="20" height="1.300" fill="#aaa"/>
 <rect x="52" y="140.600" width="5" height="1.600" fill="#555"/>
 <g fill="none" stroke="#dfe5ec" stroke-width=".6"><rect x="59" y="137.500" width="25" height="7.500" rx="1"/><rect x="86" y="137.500" width="11" height="7.500" rx="1"/><rect x="99" y="137.500" width="12" height="7.500" rx="1"/></g>
 <g fill="#4a7fb0"><rect x="62" y="140.600" width="19" height="1.500"/><rect x="88.500" y="140.600" width="6" height="1.500"/><rect x="101.500" y="140.600" width="7" height="1.500"/></g>
 <rect x="52" y="157.300" width="8" height="1.700" fill="#333"/>
</svg></div>
<div class="lbl" style="background:#e6e6e6"><div class="abs" style="left:0;top:0;width:280px;height:13px;background:#fff"></div><div class="abs" style="left:50px;top:21px;width:47px;height:1.500px;background:#f2f2f2"></div><div class="abs" style="left:50px;top:36px;width:150px;height:1.500px;background:#f0f0f0"></div><div class="abs" style="left:50px;top:48.500px;width:88px;height:1.500px;background:#f2f2f2"></div></div>
<svg class="fav"><use href="#nps" width="32" height="32"/></svg>
<div class="ttl" style="font-size:25.2px">Poems - Arts in...</div>
</div>

<!-- Cherry Blossom -->
<div class="card" style="left:619px;top:611px">
<div class="img"><svg width="280" height="164" viewBox="0 0 280 164">
 <defs><filter id="cb_n" x="0" y="0" width="100%" height="100%"><feTurbulence type="fractalNoise" baseFrequency=".07 .12" numOctaves="2" seed="4"/><feColorMatrix values="0 0 0 0 .96  0 0 0 0 .95  0 0 0 0 .94  2.600 0 0 0 -.75"/></filter></defs>
 <rect width="280" height="164" fill="#fff"/>
 <rect width="280" height="11" fill="#000"/>
 <rect y="11" width="280" height="57" fill="#808080"/>
 <rect y="68" width="280" height="17" fill="#404040"/>
 <rect y="85" width="280" height="11.400" fill="#000"/>
 <path d="M45 3 q2.500 -1 5 0 q0 4 -2.500 6.500 q-2.500 -2.500 -2.500 -6.500 z" fill="#c78a3c"/>
 <g fill="#c9c9c9"><rect x="53" y="4.900" width="29" height="1.500"/><rect x="198" y="5.100" width="12" height="1.300"/><rect x="217" y="5.100" width="11" height="1.300"/></g>
 <text x="50" y="79.300" font-size="6.800" font-weight="700" fill="#fff" font-family="Liberation Sans" textLength="56" lengthAdjust="spacingAndGlyphs">Cherry Blossom Festival</text>
 <g fill="#c4c4c4"><rect x="55" y="90" width="6" height="1.400"/><rect x="73" y="90" width="16" height="1.400"/><rect x="96" y="90" width="15" height="1.400"/><rect x="120" y="88.700" width="10" height="1.300"/><rect x="118" y="91.200" width="15" height="1.300"/><rect x="141" y="88.700" width="14" height="1.300"/><rect x="142" y="91.200" width="13" height="1.300"/><rect x="167" y="90" width="8" height="1.400"/></g>
 <rect x="51" y="104.300" width="34" height="1.300" fill="#9a9a78" opacity=".8"/>
 <text x="50" y="118" font-size="7.800" font-weight="700" fill="#222" font-family="Liberation Serif" textLength="126" lengthAdjust="spacingAndGlyphs">When Spring arrives in the Nation's Capital</text>
 <g stroke="#969696" stroke-width="1.35" stroke-dasharray="7 1.2 4 1.2 10 1.2 5.500 1.200 3 1.200 8 1.200" fill="none"><path d="M50 126.05 H224" stroke-dashoffset="0"/><path d="M50 131.65 H228" stroke-dashoffset="9"/><path d="M50 137.35 H229" stroke-dashoffset="18"/><path d="M50 142.95 H68" stroke-dashoffset="27"/></g>
 <rect x="50" y="149" width="180" height="15" fill="#b9b0a4"/>
 <rect x="50" y="149" width="180" height="15" filter="url(#cb_n)"/>
 <path d="M50 149 H66 L56 156 L50 160 Z" fill="#6c5f50" opacity=".7"/>
 <path d="M58 164 Q80 152 92 149" stroke="#1c1c18" stroke-width="2.200" fill="none"/>
 <path d="M176 149 H226 L230 158 V164 H214 Q196 160 176 149 Z" fill="#2e3026" opacity=".9"/>
 <path d="M216 150 L226 162" stroke="#e8e4e0" stroke-width="2"/>
</svg></div>
<div class="lbl" style="background:#fff"><div class="abs" style="left:50px;top:0;width:180px;height:72px;background:linear-gradient(180deg,#f3f2f0,#f8f7f5)"></div><div class="abs" style="left:176px;top:0;width:54px;height:30px;background:linear-gradient(180deg,#ebebe9,#f6f5f3)"></div></div>
<svg class="fav"><use href="#nps" width="32" height="32"/></svg>
<div class="ttl" style="font-size:24.6px">Cherry Blossom...</div>
</div>

<!-- ============ ROW 3 ============ -->
<!-- Office -->
<div class="card" style="left:27px;top:959px">
<div class="img"><svg width="280" height="164" viewBox="0 0 280 164">
 <rect width="280" height="164" fill="#ebebeb"/>
 <rect width="280" height="8" fill="#5558af"/>
 <rect y="8" width="280" height="13" fill="#fff"/>
 <rect y="21" width="280" height="17" fill="#d83b01"/>
 <rect x="82" y="3.400" width="90" height="1.300" fill="#c9caec" opacity=".9"/><rect x="175" y="3.300" width="17" height="1.600" fill="#eeeefa"/><path d="M195 2.500 l2.500 1.500 l-2.500 1.500 z" fill="#fff"/>
 <rect x="256" y="12.800" width="10" height="1.400" fill="#777"/>
 <path d="M14.500 27 L18 26 V33.500 L14.500 32.500 Z M18 26 l1.500 .5 v6.500 l-1.500 .5" fill="#fff" stroke="#fff" stroke-width=".5"/>
 <text x="20.500" y="32.300" font-size="6.300" fill="#fff" font-family="Liberation Sans" textLength="11" lengthAdjust="spacingAndGlyphs">Office</text>
 <g fill="#f0a88c"><rect x="40" y="30" width="13" height="1.300"/><rect x="65.500" y="30" width="15" height="1.300"/><rect x="90" y="30" width="11.500" height="1.300"/><rect x="110" y="30" width="17.500" height="1.300"/></g>
</svg></div>
<div class="lbl" style="background:#fff"></div>
<svg class="fav" viewBox="0 0 32 32"><path fill-rule="evenodd" d="M2.500 6 L19.700 0 L29.200 2.400 V29.300 L19.700 31.900 L2.500 25.200 Z M8.200 8.300 L19.900 5.200 V27.800 L3.600 25 L8.200 23.200 Z" fill="#e04e1a" filter="url(#bs)"/></svg>
<div class="ttl" style="font-size:26.1px">Microsoft Offic...</div>
</div>

<!-- Skype -->
<div class="card" style="left:323px;top:959px">
<div class="img"><svg width="280" height="164" viewBox="0 0 280 164">
 <rect width="280" height="164" fill="#03355a"/>
 <rect width="280" height="17.700" fill="#fff"/>
 <g fill="#4d7798" font-size="5" font-family="Liberation Sans"><text x="65" y="10.800" textLength="21" lengthAdjust="spacingAndGlyphs">Downloads</text><text x="92" y="10.800" textLength="16" lengthAdjust="spacingAndGlyphs">Business</text><text x="113" y="10.800" textLength="10.500" lengthAdjust="spacingAndGlyphs">Rates</text><text x="129" y="10.800" textLength="9" lengthAdjust="spacingAndGlyphs">Help</text></g>
 <rect x="219.300" y="4.900" width="23.500" height="8.600" rx="4.300" fill="#fff" stroke="#1c86d1" stroke-width=".7"/><rect x="224" y="8.500" width="10" height="1.700" fill="#23527a"/>
 <text x="24.500" y="57.500" font-size="13" fill="#d7e0e8" font-family="Liberation Sans" textLength="230.500" lengthAdjust="spacingAndGlyphs">Connect with your loved ones, wherever</text>
 <text x="118.500" y="75.500" font-size="13" fill="#d7e0e8" font-family="Liberation Sans" textLength="43" lengthAdjust="spacingAndGlyphs">you are</text>
 <text x="83" y="91.500" font-size="7.500" fill="#c3cfda" font-family="Liberation Sans" textLength="114" lengthAdjust="spacingAndGlyphs">Skype makes it easy to stay in touch.</text>
 <rect x="84.200" y="103.300" width="55.600" height="14.400" rx="7.200" fill="none" stroke="#e6edf3" stroke-width=".8"/>
 <rect x="145.700" y="103" width="50.300" height="15" rx="7.500" fill="#0078d4"/>
 <rect x="93" y="109.900" width="38" height="1.500" fill="#dfe7ee"/><rect x="154.500" y="109.900" width="32.500" height="1.500" fill="#e4f0fb"/>
 <rect x="124" y="136.800" width="32" height="1.200" fill="#b9c7d4"/>
 <circle cx="140" cy="148.700" r="5.700" fill="#0a2440" stroke="#8fa6ba" stroke-width=".8"/>
</svg></div>
<div class="lbl" style="background:#f9fbfd"><div class="abs" style="left:60px;top:10px;width:46px;height:3px;background:#eef2f7"></div><div class="abs" style="left:60px;top:22px;width:74px;height:12px;background:#f1f4f8"></div><div class="abs" style="left:200px;top:9px;width:70px;height:20px;background:#f0f3f8"></div><div class="abs" style="left:200px;top:38px;width:68px;height:9px;background:#f2f5f9"></div><div class="abs" style="left:140px;top:0;width:140px;height:66px;background:#fbfcfe;opacity:.5"></div><div class="abs" style="left:0;top:66px;width:280px;height:6px;background:#fff"></div></div>
<svg class="fav" viewBox="0 0 32 32"><path d="M9 .3 Q13 -.3 16.500 1.300 Q28.500 1 31 13.500 Q33 19.500 31.500 25 Q28.500 33 20.500 31.600 Q17.500 32 15 30.600 Q3 31 1 19 Q-1 12 .8 7 Q3 1 9 .3 Z" fill="#19b4ef" filter="url(#bs)"/><text x="7.200" y="25.800" font-size="26" font-weight="700" fill="#fff" font-family="Liberation Sans">S</text></svg>
<div class="ttl" style="font-size:24px">Skype | Free cal...</div>
</div>

<!-- Xbox -->
<div class="card" style="left:619px;top:959px">
<div class="img"><svg width="280" height="164" viewBox="0 0 280 164">
 <defs>
  <radialGradient id="xb_bg" cx=".4" cy=".4" r=".75"><stop offset="0" stop-color="#1a222b"/><stop offset=".55" stop-color="#0c1116"/><stop offset="1" stop-color="#020305"/></radialGradient>
  <radialGradient id="xb_pl" cx=".7" cy=".35" r=".75"><stop offset="0" stop-color="#8a4632"/><stop offset=".45" stop-color="#5c2b1f"/><stop offset="1" stop-color="#1a0d0a"/></radialGradient>
  <radialGradient id="xb_fl" cx=".5" cy=".5" r=".5"><stop offset="0" stop-color="#fff"/><stop offset=".3" stop-color="#cfe4ff" stop-opacity=".8"/><stop offset="1" stop-color="#9cc6ff" stop-opacity="0"/></radialGradient>
  <filter id="xb_n" x="0" y="0" width="100%" height="100%"><feTurbulence type="fractalNoise" baseFrequency=".03" numOctaves="3" seed="9"/><feColorMatrix values="0 0 0 0 .16  0 0 0 0 .2  0 0 0 0 .26  1.500 0 0 0 -.55"/></filter>
 </defs>
 <rect width="280" height="164" fill="#fff"/>
 <rect y="29.500" width="280" height="134.500" fill="url(#xb_bg)"/>
 <rect y="29.500" width="280" height="134.500" filter="url(#xb_n)" opacity=".2"/>
 <rect x="14" y="3.600" width="2.300" height="2.300" fill="#f25022"/><rect x="16.600" y="3.600" width="2.300" height="2.300" fill="#7fba00"/><rect x="14" y="6.200" width="2.300" height="2.300" fill="#00a4ef"/><rect x="16.600" y="6.200" width="2.300" height="2.300" fill="#ffb900"/>
 <text x="20.500" y="8.200" font-size="5.500" fill="#555" font-family="Liberation Sans" textLength="17.500" lengthAdjust="spacingAndGlyphs">Microsoft</text>
 <g stroke="#8c8c8c" stroke-width="1.35" stroke-dasharray="7 1.2 4 1.2 10 1.2 5.500 1.200 3 1.200 8 1.200" fill="none"><path d="M47 6.05 H56" stroke-dashoffset="0"/><path d="M67 6.05 H81" stroke-dashoffset="9"/><path d="M93 6.05 H104" stroke-dashoffset="18"/><path d="M248 6.5 H251" stroke-dashoffset="27"/></g>
 <rect x="180.300" y="1.900" width="60" height="8.500" fill="#fff" stroke="#bbb" stroke-width=".6"/><circle cx="236.500" cy="5.700" r="1.300" fill="none" stroke="#888" stroke-width=".5"/>
 <g fill="#7d7d7d"><rect x="47" y="19.600" width="15" height="1.600"/><rect x="74" y="19.600" width="10" height="1.600"/><rect x="96" y="19.600" width="15" height="1.600"/><rect x="122" y="19.600" width="18" height="1.600"/><rect x="151" y="19.600" width="26" height="1.600"/><rect x="190" y="19.600" width="20" height="1.600"/><rect x="222" y="19.600" width="13" height="1.600"/></g>
 <!-- figure -->
 <circle cx="73" cy="114" r="30" fill="#0e1a2c" opacity=".9" filter="url(#b1)"/>
 <circle cx="73" cy="114" r="28.500" fill="url(#xb_pl)"/>
 <path d="M96 98 A28.500 28.500 0 0 1 92 136" stroke="#3a6aa0" stroke-width="1.200" fill="none" opacity=".8"/>
 <path d="M49 88 Q54 83 61 83 L80 118 L93 142 L84 148 L68 122 Z" fill="#4b5962"/>
 <path d="M52 87 L58 85 L76 118 L70 121 Z" fill="#6f8088" opacity=".7"/>
 <path d="M49 89 L68 122 L84 148 L78 158 L60 164 H34 Q36 140 40 122 Q42 104 49 89 Z" fill="#13171b"/>
 <path d="M41 104 Q45 110 50 112 L47 118 Q42 114 41 104 Z" fill="#2f7f9a"/>
 <path d="M46 118 Q56 114 64 124 Q66 134 58 140 Q48 138 46 118 Z" fill="#222a30"/>
 <path d="M72 118 l3 0 l-1.500 5 z" fill="#b8404a"/>
 <path d="M0 112 L14 108 L22 106 L30 118 L28 132 L42 150 L34 164 H0 Z" fill="#555c64"/>
 <path d="M14 108 L22 106 L24 118 L16 121 Z" fill="#a3abb1"/>
 <path d="M0 118 L14 112 L18 124 L4 134 L0 132 Z" fill="#767e86"/>
 <path d="M20 118 L29 121 L28 126 L19 123 Z" fill="#c4484e"/>
 <path d="M4 136 L20 128 L30 140 L20 156 L6 160 Z" fill="#3d434a"/>
 <path d="M0 150 Q10 146 20 158 L22 164 H0 Z" fill="#7d8890"/>
 <path d="M28 132 L44 124 L40 150 Z" fill="#2a3036"/>
 <ellipse cx="86.500" cy="88.500" rx="12" ry="5.500" fill="url(#xb_fl)"/>
 <ellipse cx="86.500" cy="88.500" rx="4" ry="2" fill="#fff" opacity=".9"/>
 <text x="165.500" y="117" font-size="14.200" fill="#e2e2e2" font-family="Liberation Sans" textLength="62.500" lengthAdjust="spacingAndGlyphs">Mass Effect</text>
 <text x="165.500" y="134.600" font-size="14.200" fill="#e2e2e2" font-family="Liberation Sans" textLength="67" lengthAdjust="spacingAndGlyphs">Andromeda</text>
 <rect x="166" y="145.400" width="15" height="1.500" fill="#ddd"/><path d="M183.500 144.700 l1.500 1.500 l-1.500 1.500" stroke="#fff" stroke-width=".6" fill="none"/>
</svg></div>
<div class="lbl" style="background:#fff"><div class="abs" style="left:0;top:0;width:280px;height:34px;background:linear-gradient(180deg,#e4e4e4,#e9e9e9)"></div><div class="abs" style="left:0;top:0;width:100px;height:34px;background:linear-gradient(100deg,#eeeeee,#e6e6e6 80%)"></div><div class="abs" style="left:14px;top:46px;width:252px;height:26px;background:#ececec"></div><div class="abs" style="left:44px;top:58px;width:48px;height:5px;background:#f4f4f4"></div><div class="abs" style="left:105px;top:59px;width:80px;height:2.500px;background:#f3f3f3"></div></div>
<svg class="fav" viewBox="0 0 32 32"><defs><radialGradient id="xb_fv" cx=".4" cy=".3" r=".75"><stop offset="0" stop-color="#ffffff"/><stop offset=".55" stop-color="#e2e2e2"/><stop offset="1" stop-color="#b4b4b4"/></radialGradient></defs><g filter="url(#bs)"><circle cx="16" cy="16" r="15.600" fill="url(#xb_fv)"/><ellipse cx="16" cy="25" rx="8" ry="4.500" fill="#c6c6c6" opacity=".7"/><path d="M6.500 3 Q14 7 18 12 Q24 19 27.300 26.800 M25.500 3 Q18 7 14 12 Q8 19 4.500 26.800" stroke="#3fae2a" stroke-width="4.400" fill="none" stroke-linecap="butt"/><circle cx="16" cy="9.500" r="2.600" fill="#62be2a"/></g></svg>
<div class="ttl" style="font-size:24.9px">Xbox | Official S...</div>
</div>
<div id="scroll2" style="position:absolute;left:1321px;top:191px;width:4px;height:574px;background:#7a7a7a"></div>
<div class="rl" style="left:1370.0px;top:305.6px;word-spacing:-1.49px;transform:scaleX(1.0120)">where we can get a cab to carry your Highness to</div>
<div class="rl" style="left:1370.0px;top:370.6px;word-spacing:-0.26px;transform:scaleX(1.0120)">the police-station?”</div>
<div class="rl" style="left:1435.4px;top:457.6px;word-spacing:3.91px;transform:scaleX(1.0120)">“That is better,” said John Clay serenely. He</div>
<div class="rl" style="left:1370.0px;top:522.6px;word-spacing:8.84px;transform:scaleX(1.0120)">made a sweeping bow to the three of us and</div>
<div class="rl" style="left:1370.0px;top:587.6px;word-spacing:8.60px;transform:scaleX(1.0120)">walked quietly off in the custody of the detec-</div>
<div class="rl" style="left:1370.0px;top:652.6px;word-spacing:0.00px;transform:scaleX(1.0154)">tive.</div>
<div class="rl" style="left:1435.4px;top:740.6px;word-spacing:5.06px;transform:scaleX(1.0120)">“Really, Mr. Holmes,” said Mr. Merryweather</div>
<div class="rl" style="left:1370.0px;top:805.6px;word-spacing:8.08px;transform:scaleX(1.0120)">as we followed them from the cellar, “I do not</div>
<div class="rl" style="left:1370.0px;top:870.6px;word-spacing:1.92px;transform:scaleX(1.0120)">know how the bank can thank you or repay you.</div>
<div class="rl" style="left:1370.0px;top:935.6px;word-spacing:7.63px;transform:scaleX(1.0120)">There is no doubt that you have detected and</div>
<div class="rl" style="left:1370.0px;top:1000.6px;word-spacing:8.73px;transform:scaleX(1.0120)">defeated in the most complete manner one of</div>
<div class="rl" style="left:1370.0px;top:1065.6px;word-spacing:7.89px;transform:scaleX(1.0120)">the most determined attempts at bank robbery</div>
<div class="rl" style="left:1370.0px;top:1130.6px;word-spacing:-0.22px;transform:scaleX(1.0120)">that have ever come within my experience.”</div>
</body></html>
